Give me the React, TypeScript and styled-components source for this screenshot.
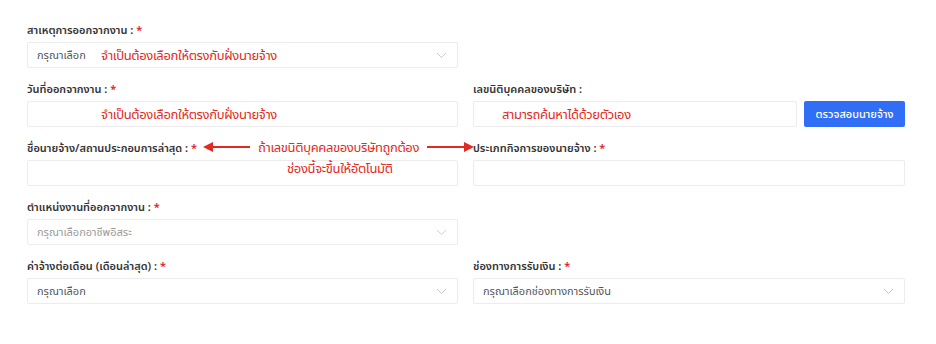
import React from 'react';
import styled, { createGlobalStyle } from 'styled-components';

const GlobalStyle = createGlobalStyle`
  html, body {
    margin: 0;
    padding: 0;
    background: #ffffff;
  }
  body {
    font-family: 'Noto Sans', 'Noto Sans Thai', sans-serif;
    color: #333;
  }
`;

const Page = styled.div`
  position: relative;
  width: 936px;
  height: 344px;
  box-sizing: border-box;
  padding: 23px 31px 0 27px;
`;

const Grid = styled.div`
  display: grid;
  grid-template-columns: 431px 432px;
  column-gap: 15px;
  row-gap: 14px;
`;

const Field = styled.div`
  display: flex;
  flex-direction: column;
  gap: 5px;
`;

const Label = styled.div`
  font-size: 11px;
  line-height: 14px;
  font-weight: 600;
  color: #333;
  white-space: nowrap;
`;

const Star = styled.span`
  color: #e0202a;
`;

const Box = styled.div<{ $disabled?: boolean; $grow?: boolean }>`
  height: 26px;
  box-sizing: border-box;
  border: 1px solid #ececec;
  border-radius: 2px;
  background: #fff;
  display: flex;
  align-items: center;
  justify-content: space-between;
  padding: 0 10px 0 9px;
  font-size: 11px;
  color: ${(p) => (p.$disabled ? '#9a9a9a' : '#555')};
  flex: ${(p) => (p.$grow ? '1 1 auto' : 'none')};
`;

const InputRow = styled.div`
  display: flex;
  gap: 7px;
`;

const CheckButton = styled.button`
  width: 101px;
  height: 26px;
  border: none;
  border-radius: 2px;
  background: #2f6ef5;
  color: #fff;
  font-family: inherit;
  font-size: 11px;
  font-weight: 500;
  padding: 0;
`;

const Note = styled.div<{ $x: number; $y: number }>`
  position: absolute;
  left: ${(p) => p.$x}px;
  top: ${(p) => p.$y}px;
  color: #e32a22;
  font-size: 13px;
  letter-spacing: -0.35px;
  line-height: 16px;
  white-space: nowrap;
  display: flex;
  align-items: center;
  gap: 8px;
`;

const Chevron = ({ color = '#c8c8c8' }: { color?: string }) => (
  <svg width="11" height="7" viewBox="0 0 11 7" fill="none">
    <path d="M1 1l4.5 4.5L10 1" stroke={color} strokeWidth="1" />
  </svg>
);

const Arrow = ({ dir }: { dir: 'left' | 'right' }) => (
  <svg width="47" height="10" viewBox="0 0 47 10">
    {dir === 'left' ? (
      <>
        <path d="M0 5l10-5v10z" fill="#e32a22" />
        <path d="M8 5h39" stroke="#e32a22" strokeWidth="2" />
      </>
    ) : (
      <>
        <path d="M47 5L37 0v10z" fill="#e32a22" />
        <path d="M0 5h39" stroke="#e32a22" strokeWidth="2" />
      </>
    )}
  </svg>
);

const Req = ({ text }: { text: string }) => (
  <Label>
    {text} : <Star>*</Star>
  </Label>
);

export default function App() {
  return (
    <>
      <GlobalStyle />
      <Page>
        <Grid>
          <Field>
            <Req text="สาเหตุการออกจากงาน" />
            <Box>
              กรุณาเลือก
              <Chevron />
            </Box>
          </Field>
          <div />

          <Field>
            <Req text="วันที่ออกจากงาน" />
            <Box />
          </Field>
          <Field>
            <Label>เลขนิติบุคคลของบริษัท :</Label>
            <InputRow>
              <Box $grow />
              <CheckButton>ตรวจสอบนายจ้าง</CheckButton>
            </InputRow>
          </Field>

          <Field>
            <Req text="ชื่อนายจ้าง/สถานประกอบการล่าสุด" />
            <Box />
          </Field>
          <Field>
            <Req text="ประเภทกิจการของนายจ้าง" />
            <Box />
          </Field>

          <Field>
            <Req text="ตำแหน่งงานที่ออกจากงาน" />
            <Box $disabled>
              กรุณาเลือกอาชีพอิสระ
              <Chevron color="#d0d0d0" />
            </Box>
          </Field>
          <div />

          <Field>
            <Req text="ค่าจ้างต่อเดือน (เดือนล่าสุด)" />
            <Box>
              กรุณาเลือก
              <Chevron />
            </Box>
          </Field>
          <Field>
            <Req text="ช่องทางการรับเงิน" />
            <Box>
              กรุณาเลือกช่องทางการรับเงิน
              <Chevron />
            </Box>
          </Field>
        </Grid>

        <Note $x={101} $y={47}>จำเป็นต้องเลือกให้ตรงกับฝั่งนายจ้าง</Note>
        <Note $x={101} $y={106}>จำเป็นต้องเลือกให้ตรงกับฝั่งนายจ้าง</Note>
        <Note $x={502} $y={106}>สามารถค้นหาได้ด้วยตัวเอง</Note>
        <Note $x={203} $y={139}>
          <Arrow dir="left" />
          ถ้าเลขนิติบุคคลของบริษัทถูกต้อง
          <Arrow dir="right" />
        </Note>
        <Note $x={287} $y={160}>ช่องนี้จะขึ้นให้อัตโนมัติ</Note>
      </Page>
    </>
  );
}
